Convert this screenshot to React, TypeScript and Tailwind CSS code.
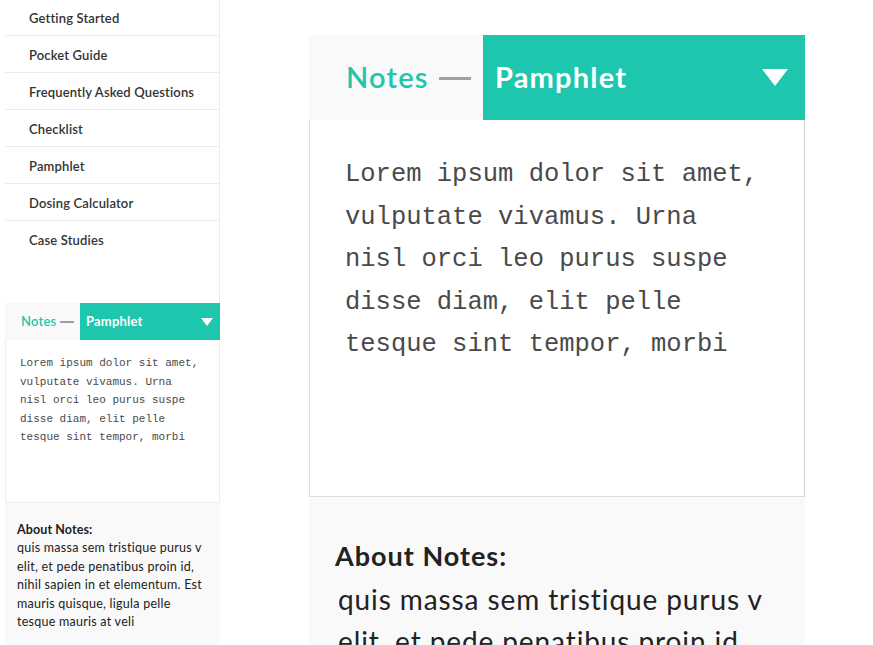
const NAV_ITEMS = [
  'Getting Started',
  'Pocket Guide',
  'Frequently Asked Questions',
  'Checklist',
  'Pamphlet',
  'Dosing Calculator',
  'Case Studies',
];

const NOTE_LINES = [
  'Lorem ipsum dolor sit amet,',
  'vulputate vivamus. Urna',
  'nisl orci leo purus suspe',
  'disse diam, elit pelle',
  'tesque sint tempor, morbi',
];

const ABOUT_TEXT =
  'quis massa sem tristique purus v elit, et pede penatibus proin id, nihil sapien in et elementum. Est mauris quisque, ligula pelle tesque mauris at veli';

const sans = 'font-["Lato","Open_Sans",sans-serif]';
const mono = 'font-["Liberation_Mono","Courier_New",monospace]';

function Triangle({ className }: { className?: string }) {
  return (
    <svg viewBox="0 0 26 17" className={className} aria-hidden="true">
      <polygon points="0,0 26,0 13,17" fill="#fff" />
    </svg>
  );
}

function NotesWidget({ size }: { size: 'sm' | 'lg' }) {
  const lg = size === 'lg';
  return (
    <div className={`flex flex-col ${sans}`}>
      {/* Header */}
      <div className={`flex ${lg ? 'h-[85px]' : 'h-[37px]'}`}>
        <div
          className={`flex items-center bg-[#f9f9f9] ${
            lg ? 'w-[174px] pl-[37px] gap-[10px]' : 'w-[75px] pl-[16px] gap-[4px]'
          }`}
        >
          <span
            className={`font-semibold text-[#1ec6ad] ${lg ? 'text-[29px] tracking-[1.2px] -mt-[2px]' : 'text-[13px] tracking-[0.2px]'}`}
          >
            Notes
          </span>
          <span className={`bg-[#a0a0a0] ${lg ? 'w-[32px] h-[3px] mt-[1px]' : 'w-[14px] h-[1.5px] mt-[1px]'}`} />
        </div>
        <div
          className={`flex flex-1 items-center justify-between bg-[#1ec6ad] ${
            lg ? 'pl-[12px] pr-[17px]' : 'pl-[6px] pr-[7px]'
          }`}
        >
          <span
            className={`font-bold text-white ${lg ? 'text-[29px] tracking-[1.2px] -mt-[2px]' : 'text-[13px] tracking-[0.2px]'}`}
          >
            Pamphlet
          </span>
          <Triangle className={lg ? 'w-[26px] h-[17px]' : 'w-[12px] h-[8px]'} />
        </div>
      </div>

      {/* Body */}
      <div
        className={`bg-white border border-t-0 ${
          lg
            ? 'h-[377px] border-[#dcdcdc] border-r-[#cfcfcf] pl-[35px] pt-[34px]'
            : 'h-[163px] border-[#eee] pl-[14px] pt-[14px]'
        }`}
      >
        <div className={`${mono} text-[#4a4a4a] ${lg ? 'text-[25.5px] leading-[42.5px]' : 'text-[11px] leading-[18.5px]'}`}>
          {NOTE_LINES.map((line) => (
            <div key={line}>{line}</div>
          ))}
        </div>
      </div>

      {/* About */}
      <div
        className={`bg-[#f9f9f9] text-[#222] ${
          lg ? 'pl-[26px] pr-[30px] pt-[42px] pb-[20px]' : 'pl-[12px] pr-[10px] pt-[17px] pb-[14px]'
        }`}
      >
        <div
          className={`font-bold ${lg ? 'text-[27px] leading-[34px] tracking-[1px]' : 'text-[12.5px] leading-[19px] tracking-[0.1px]'}`}
        >
          About Notes:
        </div>
        <p
          className={`${
            lg
              ? 'mt-[5px] pl-[3px] text-[28px] leading-[42px] tracking-[0.9px]'
              : 'text-[12.5px] leading-[18.5px] tracking-[0.25px]'
          }`}
        >
          {ABOUT_TEXT}
        </p>
      </div>
    </div>
  );
}

export default function App() {
  return (
    <div className={`flex h-[645px] overflow-hidden bg-white ${sans}`}>
      <aside className="ml-[5px] w-[215px] shrink-0 border-r border-[#ececec] flex flex-col">
        <nav className="-mt-px">
          {NAV_ITEMS.map((item, i) => (
            <div
              key={item}
              className={`flex h-[37px] items-center pl-[24px] pt-[3px] text-[13px] tracking-[0.15px] font-semibold text-[#333] ${
                i < NAV_ITEMS.length - 1 ? 'border-b border-[#ececec]' : ''
              }`}
            >
              {item}
            </div>
          ))}
        </nav>
        <div className="mt-[45px] -mr-px">
          <NotesWidget size="sm" />
        </div>
      </aside>

      <main className="ml-[89px] mt-[35px] w-[496px] shrink-0">
        <NotesWidget size="lg" />
      </main>
    </div>
  );
}
